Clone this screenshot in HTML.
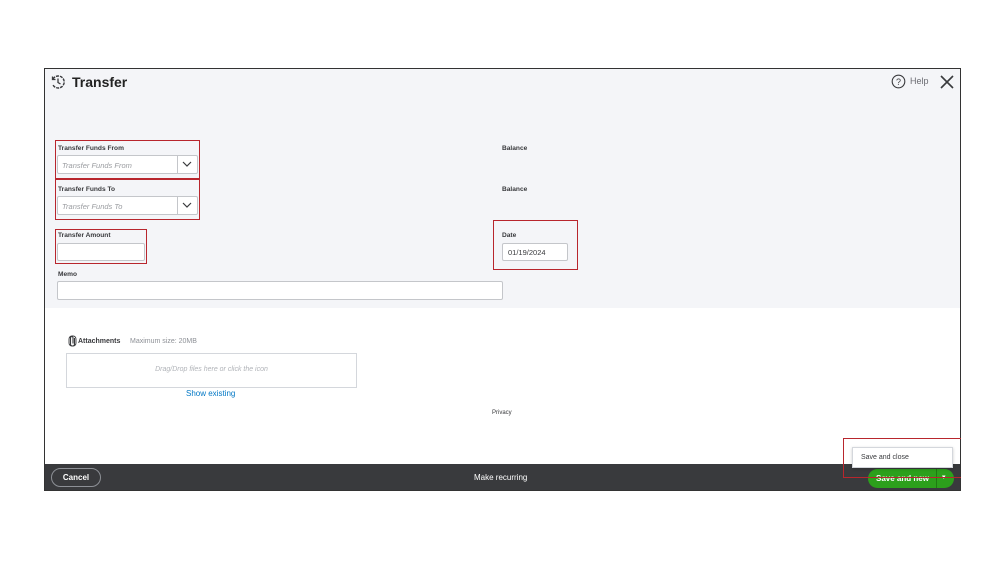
<!DOCTYPE html>
<html><head><meta charset="utf-8"><style>
*{box-sizing:border-box;margin:0;padding:0}
body{width:999px;height:562px;background:#fff;font-family:"Liberation Sans",sans-serif;position:relative;overflow:hidden}
.a{position:absolute}
.lbl{font-size:6.6px;color:#393a3d;font-weight:bold}
.inp{background:#fff;border:1px solid #c4c6ca;border-radius:2px}
.ph{font-size:7.5px;color:#9a9ca0;font-style:italic}
.red{border:1px solid #b8262d}
</style></head><body>
<div class="a" style="left:44px;top:68px;width:917px;height:423px;border:1px solid #333;background:#fff"></div>
<div class="a" style="left:45px;top:69px;width:915px;height:239px;background:#f4f5f8"></div>
<svg class="a" style="left:50px;top:74px" width="16" height="16" viewBox="0 0 16 16"><path d="M3 5A6 6 0 1 1 3 11" fill="none" stroke="#393a3d" stroke-width="1.4" stroke-dasharray="3 1"/><path d="M8 4.5V8.5L10.5 10" fill="none" stroke="#393a3d" stroke-width="1.3"/><path d="M2.5 2.5V5.5H5.5" fill="none" stroke="#393a3d" stroke-width="1.3"/></svg>
<div class="a" style="left:72px;top:74px;font-size:14px;font-weight:bold;color:#222">Transfer</div>
<svg class="a" style="left:891px;top:74px" width="15" height="15" viewBox="0 0 15 15"><circle cx="7.5" cy="7.5" r="6.3" fill="none" stroke="#393a3d" stroke-width="1.1"/><text x="7.5" y="10.8" font-size="9" text-anchor="middle" fill="#393a3d" font-family="Liberation Sans">?</text></svg>
<div class="a" style="left:910px;top:76px;font-size:9px;color:#6b6c72">Help</div>
<svg class="a" style="left:939px;top:74px" width="16" height="16" viewBox="0 0 16 16"><path d="M2 2L14 14M14 2L2 14" stroke="#393a3d" stroke-width="1.6"/></svg>

<div class="a red" style="left:55px;top:140px;width:145px;height:39px"></div>
<div class="a red" style="left:55px;top:179px;width:145px;height:41px"></div>
<div class="a red" style="left:55px;top:229px;width:92px;height:35px"></div>
<div class="a red" style="left:493px;top:220px;width:85px;height:50px"></div>

<div class="a lbl" style="left:58px;top:145px">Transfer Funds From</div>
<div class="a inp" style="left:57px;top:155px;width:141px;height:19px"></div>
<div class="a" style="left:177px;top:156px;width:1px;height:17px;background:#c4c6ca"></div>
<div class="a ph" style="left:62px;top:161px">Transfer Funds From</div>
<svg class="a" style="left:182px;top:160px" width="10" height="8"><path d="M1 2L5 6L9 2" fill="none" stroke="#393a3d" stroke-width="1.2"/></svg>

<div class="a lbl" style="left:58px;top:186px">Transfer Funds To</div>
<div class="a inp" style="left:57px;top:196px;width:141px;height:19px"></div>
<div class="a" style="left:177px;top:197px;width:1px;height:17px;background:#c4c6ca"></div>
<div class="a ph" style="left:62px;top:202px">Transfer Funds To</div>
<svg class="a" style="left:182px;top:201px" width="10" height="8"><path d="M1 2L5 6L9 2" fill="none" stroke="#393a3d" stroke-width="1.2"/></svg>

<div class="a lbl" style="left:58px;top:232px">Transfer Amount</div>
<div class="a inp" style="left:57px;top:243px;width:88px;height:18px"></div>

<div class="a lbl" style="left:58px;top:271px">Memo</div>
<div class="a inp" style="left:57px;top:281px;width:446px;height:19px"></div>

<div class="a lbl" style="left:502px;top:145px">Balance</div>
<div class="a lbl" style="left:502px;top:186px">Balance</div>
<div class="a lbl" style="left:502px;top:232px">Date</div>
<div class="a inp" style="left:502px;top:243px;width:66px;height:18px"></div>
<div class="a" style="left:508px;top:248px;font-size:7.5px;color:#393a3d">01/19/2024</div>

<svg class="a" style="left:68px;top:335px" width="9" height="12" viewBox="0 0 9 12"><path d="M6.5 3V9A2 2 0 0 1 2.5 9V2.5A1.3 1.3 0 0 1 5 2.5V8.5" fill="none" stroke="#393a3d" stroke-width="1.1"/><rect x="1" y="1" width="7" height="10" rx="3" fill="none" stroke="#393a3d" stroke-width="0.9"/></svg>
<div class="a" style="left:78px;top:338px;font-size:7px;font-weight:bold;color:#393a3d">Attachments</div>
<div class="a" style="left:130px;top:338px;font-size:7px;color:#8d9096">Maximum size: 20MB</div>
<div class="a" style="left:66px;top:353px;width:291px;height:35px;border:1px solid #d4d7dc;background:#fff"></div>
<div class="a" style="left:66px;top:366px;width:291px;text-align:center;font-size:7px;font-style:italic;color:#b0b3b8">Drag/Drop files here or click the icon</div>
<div class="a" style="left:186px;top:389px;font-size:8px;color:#0077c5">Show existing</div>
<div class="a" style="left:492px;top:410px;font-size:6px;color:#393a3d">Privacy</div>

<div class="a" style="left:45px;top:464px;width:915px;height:26px;background:#393a3d"></div>
<div class="a" style="left:51px;top:468px;width:50px;height:19px;border:1px solid #8d9096;border-radius:10px;color:#fff;font-size:8px;font-weight:bold;text-align:center;line-height:17px">Cancel</div>
<div class="a" style="left:474px;top:473px;font-size:8px;color:#fff">Make recurring</div>
<div class="a" style="left:868px;top:469px;width:86px;height:19px;background:#2ca01c;border-radius:10px"></div>
<div class="a" style="left:936px;top:469px;width:1px;height:19px;background:#1f7a12"></div>
<div class="a" style="left:876px;top:474px;font-size:8px;font-weight:bold;color:#fff">Save and new</div>
<div class="a" style="left:942px;top:473px;font-size:7px;color:#fff">▾</div>
<div class="a red" style="left:843px;top:438px;width:118px;height:40px;border-right:none"></div>
<div class="a" style="left:852px;top:447px;width:101px;height:21px;background:#fff;border:1px solid #d4d7dc;box-shadow:0 1px 3px rgba(0,0,0,.2)"></div>
<div class="a" style="left:861px;top:454px;font-size:7px;color:#393a3d">Save and close</div>
</body></html>
